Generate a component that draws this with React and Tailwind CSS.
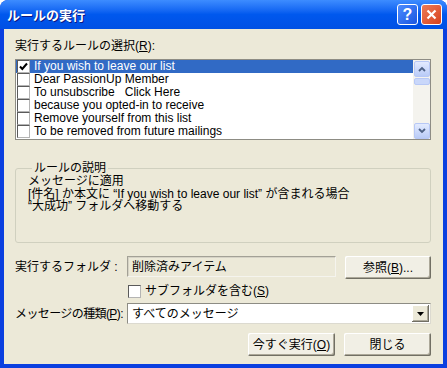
import React from "react";

const rules = [
  "If you wish to leave our list",
  "Dear PassionUp Member",
  "To unsubscribe   Click Here",
  "because you opted-in to receive",
  "Remove yourself from this list",
  "To be removed from future mailings",
];

const Check = ({ checked }) => (
  <span className="w-[13px] h-[13px] shrink-0 bg-white border border-t-[#5a5a5a] border-l-[#5a5a5a] border-r-[#b4b4b4] border-b-[#b4b4b4] flex items-center justify-center">
    {checked && (
      <svg width="9" height="9" viewBox="0 0 9 9">
        <path d="M1 4.5 L3.3 7 L8 1.5" stroke="#000" strokeWidth="2" fill="none" />
      </svg>
    )}
  </span>
);

const ScrollBtn = ({ up }) => (
  <div className="w-[16px] h-[16px] rounded-[2px] border border-[#b7c8f6] bg-gradient-to-b from-[#e3ebff] to-[#b9cbf7] flex items-center justify-center">
    <svg width="8" height="6" viewBox="0 0 8 6">
      <path d={up ? "M1 5 L4 2 L7 5" : "M1 1 L4 4 L7 1"} stroke="#4d6185" strokeWidth="1.8" fill="none" />
    </svg>
  </div>
);

const Button = ({ children, className = "" }) => (
  <button
    className={`h-[23px] bg-[#f1efe5] rounded-[2px] shadow-[inset_-1px_-1px_#716f64,inset_1px_1px_#ffffff,inset_-2px_-2px_#aca899] flex items-center justify-center leading-[12px] whitespace-nowrap ${className}`}
  >
    {children}
  </button>
);

export default function App() {
  return (
    <div className="w-[447px] h-[368px] flex flex-col bg-[#0a3fe0] rounded-t-[8px] overflow-hidden font-['Liberation_Sans','Noto_Sans_CJK_JP',sans-serif] text-[12px] text-black">
      {/* title bar */}
      <div className="h-[29px] shrink-0 flex items-center justify-between pl-[7px] pr-[5px] bg-gradient-to-b from-[#3d8cff] via-[#0058ee] to-[#0050e4]">
        <span className="text-white font-bold text-[13px] [text-shadow:1px_1px_#0a1883] font-['Noto_Sans_CJK_JP',sans-serif]">
          ルールの実行
        </span>
        <div className="flex gap-[3px]">
          <div className="w-[21px] h-[21px] rounded-[3px] border border-white bg-gradient-to-br from-[#4d8cff] to-[#1a55e0] flex items-center justify-center text-white font-bold text-[16px] leading-none">
            ?
          </div>
          <div className="w-[21px] h-[21px] rounded-[3px] border border-white bg-gradient-to-br from-[#ec7a55] to-[#d8401a] flex items-center justify-center">
            <svg width="11" height="11" viewBox="0 0 11 11">
              <path d="M1.5 1.5 L9.5 9.5 M9.5 1.5 L1.5 9.5" stroke="#fff" strokeWidth="2.2" />
            </svg>
          </div>
        </div>
      </div>

      {/* body */}
      <div className="flex-1 mx-[4px] mb-[4px] bg-[#ece9d8] pl-[11px] pr-[12px] pt-[11px] flex flex-col leading-[12px]">
        <div>
          実行するルールの選択(<span className="underline">R</span>):
        </div>

        <div className="mt-[7px] h-[81px] border border-[#8d8c84] bg-white flex">
          <div className="flex-1 flex flex-col">
            {rules.map((r, i) => (
              <div
                key={r}
                className={`h-[13px] flex items-center gap-[4px] pl-[1px] ${i === 0 ? "bg-[#316ac5] text-white" : ""}`}
              >
                <Check checked={i === 0} />
                <span className="whitespace-pre leading-[13px]">{r}</span>
              </div>
            ))}
          </div>
          <div className="w-[17px] bg-[#f4f3ee] flex flex-col items-center pt-[1px]">
            <ScrollBtn up />
            <div className="w-[16px] h-[7px] mt-[1px] rounded-[2px] border border-[#b7c8f6] bg-[#c9d7fa]" />
            <div className="flex-1" />
            <ScrollBtn />
          </div>
        </div>

        <fieldset className="mt-[22px] h-[81px] border border-[#d0d0bf] rounded-[3px] pl-[12px]">
          <legend className="ml-[4px] px-[2px] leading-[12px]">ルールの説明</legend>
          <div className="flex flex-col leading-[12.5px] pt-[1px]">
            <span>メッセージに適用</span>
            <span>[件名] か本文に “If you wish to leave our list” が含まれる場合</span>
            <span>“大成功” フォルダへ移動する</span>
          </div>
        </fieldset>

        <div className="mt-[13px] flex items-start">
          <span className="w-[112px] pt-[5px] whitespace-nowrap">実行するフォルダ :</span>
          <div className="w-[209px] h-[21px] border border-t-[#a3a196] border-l-[#a3a196] border-r-[#f5f4ee] border-b-[#f5f4ee] shadow-[inset_1px_1px_#d6d3c6] pl-[4px] flex items-center">
            削除済みアイテム
          </div>
          <Button className="ml-[9px] w-[86px]">
            参照(<span className="underline">B</span>)...
          </Button>
        </div>

        <div className="mt-[5px] pl-[113px] flex items-center gap-[4px] h-[14px]">
          <Check />
          <span>
            サブフォルダを含む(<span className="underline">S</span>)
          </span>
        </div>

        <div className="mt-[5px] flex items-center">
          <span className="w-[112px] whitespace-nowrap tracking-[-0.6px]">
            メッセージの種類(<span className="underline">P</span>):
          </span>
          <div className="w-[304px] h-[21px] bg-white border border-t-[#8d8c84] border-l-[#8d8c84] border-r-[#dcdad0] border-b-[#dcdad0] flex items-center pl-[4px] pr-[1px]">
            <span className="flex-1">すべてのメッセージ</span>
            <div className="w-[17px] h-[17px] bg-[#ece9d8] shadow-[inset_-1px_-1px_#716f64,inset_1px_1px_#ffffff,inset_-2px_-2px_#aca899] flex items-center justify-center">
              <svg width="7" height="4" viewBox="0 0 7 4">
                <path d="M0 0 H7 L3.5 4 Z" fill="#000" />
              </svg>
            </div>
          </div>
        </div>

        <div className="mt-[9px] flex justify-end gap-[9px]">
          <Button className="w-[87px]">
            今すぐ実行(<span className="underline">O</span>)
          </Button>
          <Button className="w-[87px]">閉じる</Button>
        </div>
      </div>
    </div>
  );
}
